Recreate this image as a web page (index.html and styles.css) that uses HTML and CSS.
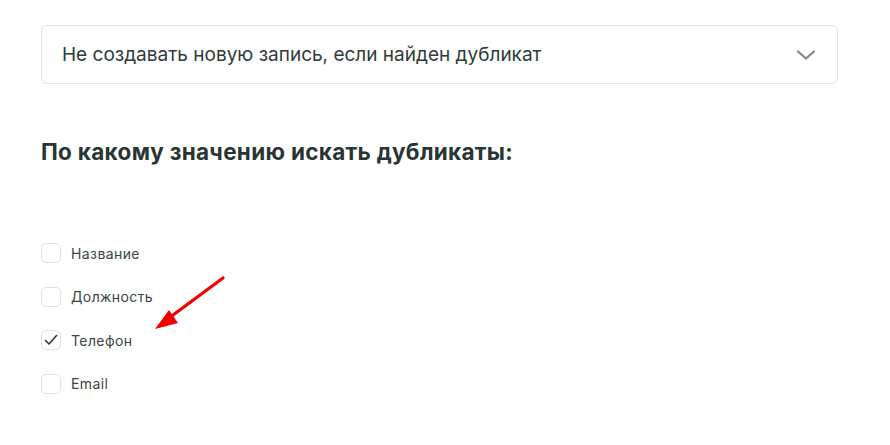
FILE: index.html
```html
<!DOCTYPE html>
<html lang="ru">
<head>
<meta charset="utf-8">
<link rel="stylesheet" href="styles.css">
</head>
<body>
<div class="page">
  <div class="select">
    <span class="select-text">Не создавать новую запись, если найден дубликат</span>
    <svg class="chev" width="18" height="10" viewBox="0 0 18 10"><path d="M1 1.5 L9 8.5 L17 1.5" fill="none" stroke="#858585" stroke-width="2.2" stroke-linecap="round" stroke-linejoin="round"/></svg>
  </div>
  <h2 class="title">По какому значению искать дубликаты:</h2>
  <ul class="options">
    <li class="option"><span class="box"></span><span class="label">Название</span></li>
    <li class="option"><span class="box"></span><span class="label">Должность</span></li>
    <li class="option"><span class="box checked"><svg width="14" height="12" viewBox="0 0 14 12"><path d="M1.5 6.5 L5 10 L12.5 1.5" fill="none" stroke="#2b3838" stroke-width="1.6" stroke-linecap="round" stroke-linejoin="round"/></svg></span><span class="label">Телефон</span></li>
    <li class="option"><span class="box"></span><span class="label">Email</span></li>
  </ul>
  <svg class="arrow" width="90" height="70" viewBox="0 0 90 70"><line x1="78" y1="12" x2="24" y2="52" stroke="#f00000" stroke-width="3.2" stroke-linecap="round"/><polygon points="10,63 24,44 33,57" fill="#f00000"/></svg>
</div>
</body>
</html>
```
FILE: styles.css
```css
* { box-sizing: border-box; }
html, body { margin: 0; padding: 0; background: #fff; }
body { font-family: "Inter", "Noto Sans", sans-serif; color: #2b3838; }
.page { position: relative; padding: 25px 0 0 41px; width: 838px; }
.select {
  height: 59px;
  border: 1px solid #e3e3e3;
  border-radius: 6px;
  display: flex;
  align-items: center;
  justify-content: space-between;
  padding: 0 22px 0 20px;
}
.select-text { font-size: 19px; color: #2d3b3b; letter-spacing: 0; }
.chev { display: block; margin-top: 1px; }
.title { margin: 53px 0 0 0; font-size: 22.5px; font-weight: 700; line-height: 30px; color: #283535; letter-spacing: 0.3px; }
.options { list-style: none; margin: 76px 0 0 0; padding: 0; display: flex; flex-direction: column; gap: 23.5px; }
.option { display: flex; align-items: center; gap: 10px; height: 20px; }
.box {
  width: 20px; height: 20px;
  border: 1px solid #e2e2e2;
  border-radius: 5px;
  display: flex; align-items: center; justify-content: center;
}
.label { font-size: 14px; color: #3a4646; letter-spacing: 0.4px; }
.arrow { position: absolute; left: 145px; top: 266px; }
```
